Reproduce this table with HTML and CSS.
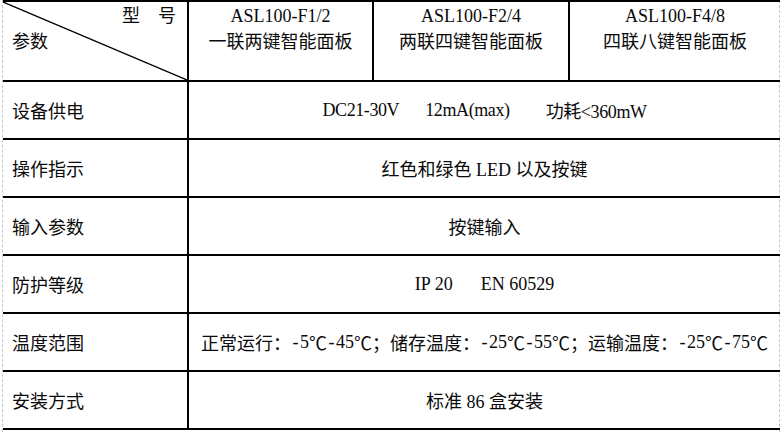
FILE: index.html
```html
<!DOCTYPE html>
<html lang="zh-CN">
<head>
<meta charset="utf-8">
<link rel="stylesheet" href="styles.css">
</head>
<body>
<div class="sheet">
  <div class="spec">
    <div class="cell head-corner">
      <svg class="diag" viewBox="0 0 184 78" preserveAspectRatio="none"><line x1="0" y1="0" x2="184" y2="78" stroke="#000" stroke-width="1.3"/></svg>
      <div class="corner-top">型　号</div>
      <div class="corner-bottom">参数</div>
    </div>
    <div class="cell head">ASL100-F1/2<br>一联两键智能面板</div>
    <div class="cell head">ASL100-F2/4<br>两联四键智能面板</div>
    <div class="cell head last">ASL100-F4/8<br>四联八键智能面板</div>

    <div class="cell label">设备供电</div>
    <div class="cell value power"><span>DC21-30V</span><span class="gap1">12mA(max)</span><span class="gap2">功耗&lt;360mW</span></div>

    <div class="cell label">操作指示</div>
    <div class="cell value">红色和绿色 LED 以及按键</div>

    <div class="cell label">输入参数</div>
    <div class="cell value">按键输入</div>

    <div class="cell label">防护等级</div>
    <div class="cell value"><span>IP 20</span><span class="gap3">EN 60529</span></div>

    <div class="cell label">温度范围</div>
    <div class="cell value">正常运行：<span class="h">-</span>5<span class="c">℃</span><span class="h">-</span>45<span class="c">℃</span>；储存温度：<span class="h">-</span>25<span class="c">℃</span><span class="h">-</span>55<span class="c">℃</span>；运输温度：<span class="h">-</span>25<span class="c">℃</span><span class="h">-</span>75<span class="c">℃</span></div>

    <div class="cell label">安装方式</div>
    <div class="cell value">标准 86 盒安装</div>
  </div>
</div>
</body>
</html>
```
FILE: styles.css
```css
html, body {
  margin: 0;
  padding: 0;
  background: #fff;
}
body {
  width: 782px;
  height: 432px;
  overflow: hidden;
  font-family: "Liberation Serif", "Noto Sans CJK SC", serif;
  font-size: 18px;
  color: #0a0a0a;
}
.sheet {
  margin-left: 2px;
  width: 778px;
  border-left: 1px dashed #c8c8c8;
  border-right: 1px dashed #c8c8c8;
  height: 432px;
  box-sizing: border-box;
}
.spec {
  display: grid;
  grid-template-columns: 186px 185px 196px 210px;
  grid-template-rows: 80px repeat(6, 58px);
  border-top: 2px solid #000;
  width: 777px;
}
.cell {
  box-sizing: border-box;
  border-bottom: 2px solid #000;
  border-right: 2px solid #000;
}
.cell.last {
  border-right: none;
}
.head {
  text-align: center;
  line-height: 26px;
  padding-top: 1px;
}
.head-corner {
  position: relative;
  padding: 1px 11px 0 9px;
  line-height: 26px;
}
.diag {
  position: absolute;
  left: 0;
  top: 0;
  width: 100%;
  height: 100%;
}
.corner-top {
  text-align: right;
}
.label {
  display: flex;
  align-items: center;
  padding-left: 9px;
}
.value {
  grid-column: 2 / 5;
  border-right: none;
  display: flex;
  align-items: center;
  justify-content: center;
  white-space: pre;
}
.power {
  letter-spacing: -0.4px;
}
.c {
  font-family: "Noto Sans CJK SC", sans-serif;
}
.h {
  display: inline-block;
  width: 9px;
  text-align: center;
}
.gap1 { margin-left: 26px; }
.gap2 { margin-left: 36px; }
.gap3 { margin-left: 28px; }
```
